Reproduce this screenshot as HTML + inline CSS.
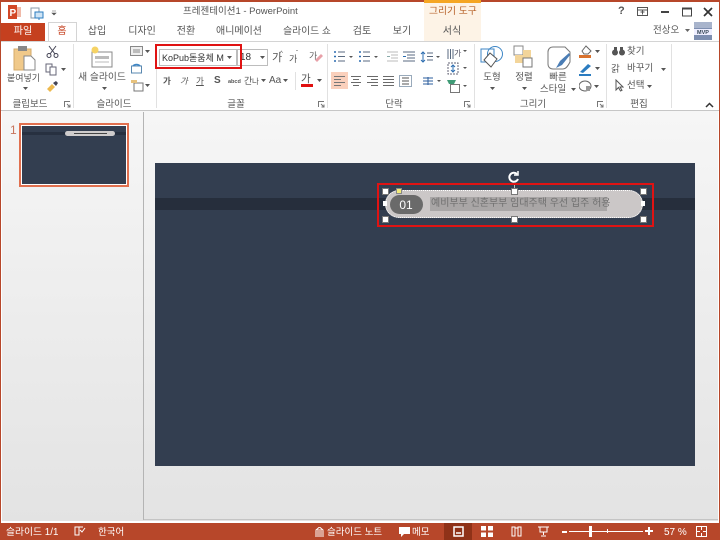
<!DOCTYPE html>
<html lang="ko"><head><meta charset="utf-8">
<style>
html,body{margin:0;padding:0}
#a{position:relative;width:720px;height:540px;overflow:hidden;background:#fff;font-family:"Liberation Sans","Noto Sans CJK KR",sans-serif;font-size:9.5px;color:#555}
#a div,#a svg,#a span.t{position:absolute}
.t{white-space:nowrap;line-height:12px;margin-top:1px}
.c{transform:translateX(-50%)}
.w{color:#fff}
</style></head><body><div id="a">
<!-- window edges -->
<div style="left:0;top:0;width:720px;height:2px;background:#b7472a"></div>
<!-- contextual tab -->
<div style="left:424px;top:2px;width:57px;height:39px;background:#fdf3e6"></div>
<div style="left:424px;top:0;width:57px;height:3px;background:#f5a623"></div>
<!-- title -->
<svg style="left:8px;top:5px" width="14" height="14"><rect x="0" y="0" width="14" height="14" fill="#fff"/><rect x="0" y="0" width="9" height="14" fill="#d24726"/><rect x="9" y="2" width="4" height="10" fill="#f0b9a8"/><text x="1.500" y="11" font-size="10" font-weight="bold" fill="#fff" font-family="Liberation Sans">P</text></svg>
<svg style="left:30px;top:7px" width="14" height="13" fill="none"><rect x="1" y="1" width="8" height="10" fill="#fff" stroke="#8a9aa8"/><rect x="5" y="5" width="8" height="6" fill="#cfe4f5" stroke="#2b7cc0"/><path d="M9 11v2" stroke="#2b7cc0"/></svg>
<svg style="left:51px;top:10px" width="6" height="6"><path d="M1 1h4M1 3h4l-2 2z" fill="#555" stroke="#555" stroke-width=".6"/></svg>
<span class="t" style="left:183px;top:5px;font-size:9.500px">프레젠테이션1 - PowerPoint</span>
<span class="t" style="left:429px;top:5px;font-size:9.800px;color:#b7622a">그리기 도구</span>
<span class="t" style="left:618px;top:4px;font-size:11px;font-weight:bold;color:#555">?</span>
<svg style="left:637px;top:7px" width="12" height="10" fill="none" stroke="#555"><rect x=".5" y=".5" width="10" height="8"/><path d="M.5 3h10M3.500 5h4M5.500 3.500v4"/></svg>
<div style="left:661px;top:11px;width:8px;height:2px;background:#444"></div>
<svg style="left:682px;top:7px" width="11" height="10" fill="none" stroke="#444"><rect x=".5" y="1" width="9" height="8"/><path d="M.5 1.500h9" stroke-width="2"/></svg>
<svg style="left:703px;top:7px" width="10" height="10" stroke="#333" stroke-width="1.700"><path d="M1 1l8 8M9 1l-8 8"/></svg>
<!-- tabs -->
<div style="left:1px;top:23px;width:44px;height:18px;background:#c5401f"></div>
<span class="t w c" style="left:23px;top:25px;font-size:10px">파일</span>
<div style="left:48px;top:22px;width:29px;height:20px;background:#fff;border:1px solid #d4d4d4;border-bottom:none;box-sizing:border-box"></div>
<span class="t c" style="left:62px;top:25px;font-size:10px;color:#c5401f">홈</span>
<span class="t c" style="left:97px;top:25px;font-size:10px">삽입</span>
<span class="t c" style="left:142px;top:25px;font-size:10px">디자인</span>
<span class="t c" style="left:186px;top:25px;font-size:10px">전환</span>
<span class="t c" style="left:239px;top:25px;font-size:10px">애니메이션</span>
<span class="t c" style="left:307px;top:25px;font-size:9.800px">슬라이드 쇼</span>
<span class="t c" style="left:362px;top:25px;font-size:10px">검토</span>
<span class="t c" style="left:402px;top:25px;font-size:10px">보기</span>
<span class="t c" style="left:452px;top:25px;font-size:10px">서식</span>
<span class="t" style="left:653px;top:24px;font-size:9.500px">전상오</span>
<svg style="left:685px;top:29px" width="6" height="4"><path d="M0 0h5l-2.500 3z" fill="#666"/></svg>
<svg style="left:694px;top:22px" width="18" height="18"><rect width="18" height="18" fill="#7d8eb0"/><path d="M0 0h18v6H0z" fill="#a8b4cc"/><rect x="0" y="7" width="18" height="6" fill="#eef"/><text x="9" y="12" text-anchor="middle" font-size="5.500" font-weight="bold" fill="#345" font-family="Liberation Sans">MVP</text></svg>
<!-- ribbon -->
<div style="left:1px;top:41px;width:718px;height:70px;background:#fff;border-top:1px solid #d4d4d4;border-bottom:1px solid #c6c6c6;box-sizing:border-box"></div>
<div style="left:73px;top:44px;width:1px;height:64px;background:#e1e1e1"></div>
<div style="left:156px;top:44px;width:1px;height:64px;background:#e1e1e1"></div>
<div style="left:327px;top:44px;width:1px;height:64px;background:#e1e1e1"></div>
<div style="left:474px;top:44px;width:1px;height:64px;background:#e1e1e1"></div>
<div style="left:606px;top:44px;width:1px;height:64px;background:#e1e1e1"></div>
<div style="left:671px;top:44px;width:1px;height:64px;background:#e1e1e1"></div>
<span class="t c" style="left:30px;top:98px;font-size:9.500px">클립보드</span>
<span class="t c" style="left:114px;top:98px;font-size:9.500px">슬라이드</span>
<span class="t c" style="left:236px;top:98px;font-size:9.500px">글꼴</span>
<span class="t c" style="left:394px;top:98px;font-size:9.500px">단락</span>
<span class="t c" style="left:533px;top:98px;font-size:9.500px">그리기</span>
<span class="t c" style="left:639px;top:98px;font-size:9.500px">편집</span>
<svg style="left:64px;top:101px" width="7" height="7" fill="none" stroke="#777"><path d="M.5 6V.5H6M3 3l3 3M6 3.500V6H3.500"/></svg>
<svg style="left:318px;top:101px" width="7" height="7" fill="none" stroke="#777"><path d="M.5 6V.5H6M3 3l3 3M6 3.500V6H3.500"/></svg>
<svg style="left:464px;top:101px" width="7" height="7" fill="none" stroke="#777"><path d="M.5 6V.5H6M3 3l3 3M6 3.500V6H3.500"/></svg>
<svg style="left:597px;top:101px" width="7" height="7" fill="none" stroke="#777"><path d="M.5 6V.5H6M3 3l3 3M6 3.500V6H3.500"/></svg>
<svg style="left:705px;top:102px" width="9" height="6" fill="none" stroke="#333" stroke-width="1.500"><path d="M1 5l3.500-3.500L8 5"/></svg>
<!-- clipboard -->
<svg style="left:13px;top:45px" width="24" height="26"><rect x="1" y="4" width="17" height="21" fill="#f0c98a" stroke="#d4aa6a"/><rect x="5" y="1" width="9" height="5" fill="#888"/><path d="M11 11h7l4 4v10H11z" fill="#fff" stroke="#888"/></svg>
<span class="t c" style="left:23.500px;top:71px;font-size:9px">붙여넣기</span>
<svg style="left:23px;top:87px" width="5" height="3"><path d="M0 0h5l-2.500 3z" fill="#555"/></svg>
<svg style="left:46px;top:45px" width="13" height="13" fill="none" stroke="#445"><path d="M3 1l6 8M10 1L4 9"/><circle cx="3" cy="10.500" r="2"/><circle cx="10" cy="10.500" r="2"/></svg>
<svg style="left:45px;top:63px" width="13" height="13" fill="#fff" stroke="#667"><rect x="1" y="1" width="6" height="8"/><rect x="5" y="4" width="6" height="8"/></svg>
<svg style="left:61px;top:68px" width="5" height="3"><path d="M0 0h5l-2.500 3z" fill="#555"/></svg>
<svg style="left:46px;top:80px" width="13" height="12"><path d="M1 9l5-5 3 3-5 5z" fill="#eeb94d"/><path d="M7 3l3-2 2 2-2 3z" fill="#445"/></svg>
<!-- slides -->
<svg style="left:90px;top:45px" width="24" height="23" fill="none"><rect x="2" y="7" width="20" height="15" fill="#fff" stroke="#888"/><rect x="5" y="11" width="14" height="3" fill="#bbb"/><path d="M5 17h14" stroke="#bbb"/><circle cx="5" cy="5" r="3.500" fill="#f6d365"/></svg>
<span class="t c" style="left:102px;top:71px;font-size:9.800px">새 슬라이드</span>
<svg style="left:102px;top:87px" width="5" height="3"><path d="M0 0h5l-2.500 3z" fill="#555"/></svg>
<svg style="left:130px;top:46px" width="13" height="10"><rect x=".5" y=".5" width="12" height="9" fill="#eee" stroke="#888"/><rect x="3" y="3" width="7" height="4" fill="#bbb"/></svg>
<svg style="left:145px;top:50px" width="5" height="3"><path d="M0 0h5l-2.500 3z" fill="#555"/></svg>
<svg style="left:130px;top:62px" width="13" height="12"><rect x="1.500" y="4" width="10" height="7" fill="#fff" stroke="#5a88b0"/><path d="M3 4a4 3 0 0 1 7 0" fill="none" stroke="#3d86c6" stroke-width="1.500"/></svg>
<svg style="left:130px;top:79px" width="14" height="13"><rect x="4" y="4" width="9" height="8" fill="#fff" stroke="#777"/><rect x="1" y="1" width="6" height="3" fill="#e7c27d"/></svg>
<svg style="left:145px;top:84px" width="5" height="3"><path d="M0 0h5l-2.500 3z" fill="#555"/></svg>
<!-- font box -->
<div style="left:159px;top:49px;width:78px;height:17px;background:#fff;border:1px solid #bdbdbd;box-sizing:border-box"></div>
<span class="t" style="left:162px;top:51px;font-size:9px;color:#333">KoPub돋움체 M</span>
<svg style="left:227px;top:56px" width="5" height="3"><path d="M0 0h5l-2.500 3z" fill="#555"/></svg>
<div style="left:237px;top:49px;width:31px;height:17px;background:#fff;border:1px solid #bdbdbd;box-sizing:border-box"></div>
<span class="t" style="left:240px;top:51px;font-size:10px;color:#333">18</span>
<svg style="left:260px;top:56px" width="5" height="3"><path d="M0 0h5l-2.500 3z" fill="#555"/></svg>
<div style="left:155px;top:44px;width:87px;height:25px;border:2px solid #e01313;box-sizing:border-box"></div>
<span class="t" style="left:272px;top:51px;font-size:11px">가</span><span class="t" style="left:280px;top:47px;font-size:6px">^</span>
<span class="t" style="left:289px;top:52px;font-size:9px">가</span><span class="t" style="left:296px;top:47px;font-size:6px">ˇ</span>
<svg style="left:309px;top:50px" width="14" height="13"><text x="0" y="9" font-size="9" fill="#666" font-family="Noto Sans CJK KR">가</text><path d="M6 10l6-6 2 2-6 6z" fill="#e8a0a8"/></svg>
<span class="t" style="left:163px;top:74px;font-size:8.500px;font-weight:bold">가</span>
<span class="t" style="left:180px;top:74px;font-size:8.500px;font-style:italic">가</span>
<span class="t" style="left:196px;top:74px;font-size:8.500px;text-decoration:underline">가</span>
<span class="t" style="left:214px;top:74px;font-size:10px;font-weight:bold;color:#555">S</span>
<span class="t" style="left:228px;top:75px;font-size:5.500px;font-weight:bold">abcd</span>
<span class="t" style="left:244px;top:74px;font-size:9px">간</span><span class="t" style="left:252px;top:75px;font-size:7.500px">나</span>
<svg style="left:261px;top:79px" width="5" height="3"><path d="M0 0h5l-2.500 3z" fill="#555"/></svg>
<span class="t" style="left:269px;top:74px;font-size:10px">Aa</span>
<svg style="left:283px;top:79px" width="5" height="3"><path d="M0 0h5l-2.500 3z" fill="#555"/></svg>
<div style="left:295px;top:72px;width:1px;height:18px;background:#e1e1e1"></div>
<span class="t" style="left:301px;top:72px;font-size:10.500px">가</span>
<div style="left:301px;top:84px;width:12px;height:3px;background:#e01010"></div>
<svg style="left:317px;top:79px" width="5" height="3"><path d="M0 0h5l-2.500 3z" fill="#555"/></svg>
<!-- paragraph -->
<svg style="left:333px;top:50px" width="112" height="14" fill="none" stroke="#5a6a80">
<path d="M1 2h2M1 6.500h2M1 11h2" stroke="#2b6cb0" stroke-width="1.500"/><path d="M5 2h7M5 6.500h7M5 11h7"/>
<path d="M16 6l2 2 2-2z" fill="#555" stroke="none"/>
<path d="M26 2h2M26 6.500h2M26 11h2" stroke="#2b6cb0" stroke-width="1.500"/><path d="M30 2h7M30 6.500h7M30 11h7"/>
<path d="M41 6l2 2 2-2z" fill="#555" stroke="none"/>
<path d="M54 2h11M58 5h7M58 8h7M54 11h11" stroke="#bbb"/><path d="M54 6.500h3" stroke="#8aa"/>
<path d="M70 2h12M74 5h8M74 8h8M70 11h12"/><path d="M70 6.500h3" stroke="#2b6cb0"/>
<path d="M90 2v10M88 4l2-2 2 2M88 10l2 2 2-2" stroke="#2b6cb0"/><path d="M94 3h6M94 6.500h6M94 10h6"/>
<path d="M103 6l2 2 2-2z" fill="#555" stroke="none"/>
</svg>
<svg style="left:447px;top:45px" width="21" height="17"><path d="M1 4v10M3.500 4v10M6 4v10" stroke="#5a6a80" fill="none"/><text x="7" y="11" font-size="8" fill="#556" font-family="Noto Sans CJK KR">가</text><path d="M16 5h4l-2 2z" fill="#555"/></svg>
<svg style="left:447px;top:62px" width="21" height="14" fill="none" stroke="#667"><path d="M1 1h10v11H1z" stroke-dasharray="2 1"/><path d="M6 3v7M4 5l2-2 2 2M4 8l2 2 2-2" stroke="#2b6cb0"/><path d="M16 5h4l-2 2z" fill="#555" stroke="none"/></svg>
<svg style="left:446px;top:78px" width="22" height="15"><path d="M1 2h9l-2 4H3z" fill="#3f9b76"/><rect x="4.500" y="6.500" width="9" height="8" fill="#fff" stroke="#777"/><path d="M17 7h4l-2 2z" fill="#555"/></svg>
<div style="left:331px;top:72px;width:17px;height:17px;background:#fad0bc"></div>
<svg style="left:334px;top:75px" width="112" height="12" fill="none" stroke="#6a6a6a">
<path d="M0 1.500h11M0 4.500h7M0 7.500h11M0 10.500h7" stroke="#777"/>
<path d="M17 1.500h10M19 4.500h6M17 7.500h10M19 10.500h6"/>
<path d="M33 1.500h11M37 4.500h7M33 7.500h11M37 10.500h7"/>
<path d="M49 1.500h11M49 4.500h11M49 7.500h11M49 10.500h11"/>
<path d="M65.500 .5h12v11h-12z" stroke="#9ab"/><path d="M68 3h7M68 6h7M68 9h7" stroke="#555"/>
<path d="M89 3h10M89 6h10M89 9h10M94 2v8" stroke="#2b5c9e"/>
<path d="M103 5l2 2 2-2z" fill="#555" stroke="none"/>
</svg>
<!-- shapes -->
<svg style="left:480px;top:45px" width="25" height="24" fill="#fff" stroke="#3d86c6"><rect x="1" y="4" width="13" height="13" fill="none"/><circle cx="15" cy="9" r="7.500" fill="none"/><path d="M10 8l7 6-6 8-7-7z" stroke="#555" fill="#fff"/></svg>
<span class="t c" style="left:492px;top:71px;font-size:9.500px">도형</span>
<svg style="left:490px;top:87px" width="5" height="3"><path d="M0 0h5l-2.500 3z" fill="#555"/></svg>
<svg style="left:513px;top:45px" width="21" height="23"><rect x="1" y="1" width="9" height="9" fill="#fff" stroke="#888"/><rect x="10" y="5" width="8" height="8" fill="#f3d59a"/><rect x="2" y="10" width="8" height="8" fill="#f3d59a"/><rect x="10" y="13" width="9" height="9" fill="#fff" stroke="#777"/></svg>
<span class="t c" style="left:524px;top:71px;font-size:9.500px">정렬</span>
<svg style="left:522px;top:87px" width="5" height="3"><path d="M0 0h5l-2.500 3z" fill="#555"/></svg>
<svg style="left:547px;top:46px" width="24" height="24"><path d="M6 1h12l5 5v10c-3 6-5 7-7 7H6c-3 0-5-2-5-5V6c0-3 2-5 5-5z" fill="#fff" stroke="#777"/><path d="M9 22l4-7 9-8 1 2-8 10z" fill="#4a7db5"/></svg>
<span class="t c" style="left:558px;top:71px;font-size:9.500px">빠른</span>
<span class="t c" style="left:553px;top:83px;font-size:9.500px">스타일</span>
<svg style="left:571px;top:88px" width="5" height="3"><path d="M0 0h5l-2.500 3z" fill="#555"/></svg>
<svg style="left:579px;top:44px" width="14" height="14"><path d="M3 7l4-5 5 5-3 3H5z" fill="#fff" stroke="#666"/><rect x="0" y="11" width="12" height="3" fill="#d9722e"/></svg>
<svg style="left:579px;top:62px" width="14" height="14"><path d="M1 10L9 2l3 2-8 7z" fill="#2b7cc0"/><rect x="0" y="12" width="12" height="2" fill="#2b7cc0"/></svg>
<svg style="left:579px;top:80px" width="14" height="12"><ellipse cx="6" cy="6" rx="6" ry="5" fill="#fff" stroke="#666"/><rect x="7" y="6" width="4" height="5" fill="#999"/></svg>
<svg style="left:595px;top:50px" width="5" height="3"><path d="M0 0h5l-2.500 3z" fill="#555"/></svg>
<svg style="left:595px;top:67px" width="5" height="3"><path d="M0 0h5l-2.500 3z" fill="#555"/></svg>
<svg style="left:594px;top:85px" width="5" height="3"><path d="M0 0h5l-2.500 3z" fill="#555"/></svg>
<!-- edit -->
<svg style="left:612px;top:46px" width="13" height="10"><circle cx="3" cy="6.500" r="3" fill="#555"/><circle cx="10" cy="6.500" r="3" fill="#555"/><rect x="2" y="1" width="3" height="4" fill="#555"/><rect x="8" y="1" width="3" height="4" fill="#555"/></svg>
<span class="t" style="left:627px;top:45px;font-size:9.500px">찾기</span>
<span class="t" style="left:611px;top:63px;font-size:9.500px">갉</span>
<span class="t" style="left:627px;top:62px;font-size:9.500px">바꾸기</span>
<svg style="left:661px;top:68px" width="5" height="3"><path d="M0 0h5l-2.500 3z" fill="#555"/></svg>
<svg style="left:615px;top:79px" width="9" height="13"><path d="M1 1v10l2.500-2.500L5.500 12l1.500-.7-2-3.300H8z" fill="#fff" stroke="#555"/></svg>
<span class="t" style="left:627px;top:79px;font-size:9.500px">선택</span>
<svg style="left:647px;top:85px" width="5" height="3"><path d="M0 0h5l-2.500 3z" fill="#555"/></svg>
<!-- body -->
<div style="left:2px;top:111px;width:716px;height:410px;background:linear-gradient(#f6f6f6,#e3e3e3)"></div>
<div style="left:143px;top:112px;width:1px;height:408px;background:#b4b4b4"></div>
<div style="left:144px;top:519px;width:574px;height:1px;background:#c4c4c4"></div>
<span class="t" style="left:10px;top:123px;font-size:12px;color:#c7745c">1</span>
<div style="left:19px;top:123px;width:110px;height:64px;border:2px solid #e1704f;background:#fff;box-sizing:border-box"></div>
<div style="left:22px;top:126px;width:104px;height:58px;background:#333e50"></div>
<div style="left:22px;top:132px;width:104px;height:3px;background:#273040"></div>
<div style="left:65px;top:131px;width:50px;height:5px;border-radius:3px;background:#cfcccc"></div>
<div style="left:74px;top:133px;width:33px;height:1px;background:#444"></div>
<!-- slide -->
<div style="left:155px;top:163px;width:540px;height:303px;background:#333e50"></div>
<div style="left:155px;top:198px;width:540px;height:12px;background:#262e3c"></div>
<svg style="left:507px;top:170px" width="14" height="14" fill="none" stroke="#fff" stroke-width="2"><path d="M11 9a4.500 4.500 0 1 1-1-5"/><path d="M11 1v4H7" stroke-width="1.500"/></svg>
<div style="left:514px;top:182px;width:1px;height:8px;background:#bbb"></div>
<div style="left:385px;top:190px;width:258px;height:28px;border-radius:14px;background:#cbc7c7;border:1px dotted #fff;box-sizing:border-box"></div>
<div style="left:390px;top:195px;width:33px;height:19px;border-radius:10px;background:#6a6a6a"></div>
<span class="t c w" style="left:406px;top:197px;font-size:12px;line-height:14px">01</span>
<div style="left:430px;top:197px;width:177px;height:14px;background:#a9a6a6"></div>
<span class="t" style="left:431px;top:197px;font-size:10px;color:#707070">예비부부 신혼부부 임대주택 우선 입주 허용</span>
<div style="left:382px;top:188px;width:5px;height:5px;background:#fff;border:1px solid #777"></div>
<div style="left:511px;top:188px;width:5px;height:5px;background:#fff;border:1px solid #777"></div>
<div style="left:640px;top:188px;width:5px;height:5px;background:#fff;border:1px solid #777"></div>
<div style="left:383px;top:201px;width:4px;height:5px;background:#fff"></div>
<div style="left:641px;top:201px;width:4px;height:5px;background:#fff"></div>
<div style="left:382px;top:216px;width:5px;height:5px;background:#fff;border:1px solid #777"></div>
<div style="left:511px;top:216px;width:5px;height:5px;background:#fff;border:1px solid #777"></div>
<div style="left:640px;top:216px;width:5px;height:5px;background:#fff;border:1px solid #777"></div>
<div style="left:396px;top:188px;width:4px;height:4px;background:#f2ea7a;border:1px solid #888"></div>
<div style="left:377px;top:183px;width:277px;height:44px;border:2px solid #e01313;box-sizing:border-box"></div>
<!-- window side borders -->
<div style="left:0;top:0;width:1px;height:540px;background:#b7472a"></div>
<div style="left:719px;top:0;width:1px;height:540px;background:#b7472a"></div>
<!-- status -->
<div style="left:0;top:523px;width:720px;height:17px;background:#b7472a"></div>
<div style="left:444px;top:523px;width:28px;height:17px;background:#8f3218"></div>
<span class="t w" style="left:6px;top:526px;font-size:9.800px">슬라이드 1/1</span>
<svg style="left:74px;top:526px" width="12" height="11" fill="none" stroke="#fff"><path d="M1 1h4v8H1zM5 1h4"/><path d="M6 4l2 2 3-4"/></svg>
<span class="t w" style="left:98px;top:526px;font-size:9.500px">한국어</span>
<svg style="left:315px;top:527px" width="9" height="10" fill="none" stroke="#fff"><path d="M4.500 0L1 3h7zM0 5h9M0 7h9M0 9h9"/></svg>
<span class="t w" style="left:327px;top:526px;font-size:9.500px">슬라이드 노트</span>
<svg style="left:399px;top:527px" width="11" height="10"><path d="M0 0h11v7H5l-3 3V7H0z" fill="#fff"/></svg>
<span class="t w" style="left:412px;top:526px;font-size:9.500px">메모</span>
<svg style="left:453px;top:526px" width="11" height="11" fill="none" stroke="#fff"><rect x="1" y="1" width="9" height="9" stroke-width="1.500"/><path d="M3 7h5" stroke-width="1.500"/></svg>
<svg style="left:481px;top:526px" width="12" height="11" fill="#fff"><rect width="5" height="4.500"/><rect x="7" width="5" height="4.500"/><rect y="6.500" width="5" height="4.500"/><rect x="7" y="6.500" width="5" height="4.500"/></svg>
<svg style="left:511px;top:526px" width="11" height="11" fill="none" stroke="#fff"><path d="M1 1h3v9H1zM7 1h3v9H7zM4 2h3v7"/></svg>
<svg style="left:538px;top:526px" width="11" height="11" fill="none" stroke="#fff"><path d="M0 1h11M2 1v5h7V1M5.500 6v3M3 10h5"/></svg>
<div style="left:562px;top:531px;width:5px;height:2px;background:#fff"></div>
<div style="left:569px;top:531px;width:74px;height:1px;background:#fff"></div>
<div style="left:589px;top:526px;width:3px;height:11px;background:#fff"></div>
<div style="left:607px;top:529px;width:1px;height:4px;background:#fff"></div>
<svg style="left:645px;top:527px" width="8" height="8" stroke="#fff" stroke-width="2"><path d="M4 0v8M0 4h8"/></svg>
<span class="t w" style="left:664px;top:526px;font-size:10px">57 %</span>
<svg style="left:696px;top:526px" width="11" height="11" fill="none" stroke="#fff"><rect x=".5" y=".5" width="10" height="10"/><path d="M5.500 1v3M5.500 7v3M1 5.500h3M7 5.500h3"/></svg>
</div></body></html>
